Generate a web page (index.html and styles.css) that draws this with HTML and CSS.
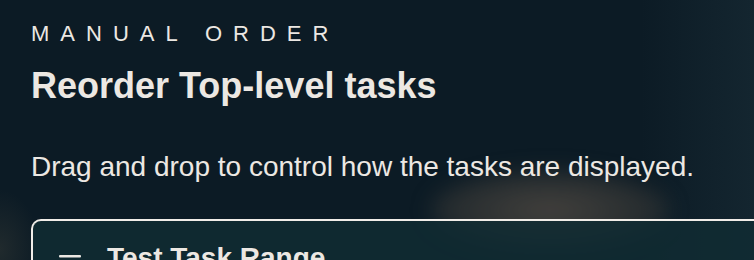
FILE: index.html
```html
<!DOCTYPE html>
<html lang="en">
<head>
<meta charset="utf-8">
<title>Manual order</title>
<link rel="stylesheet" href="styles.css">
</head>
<body>
<main class="panel">
  <div class="glow"></div>
  <p class="eyebrow">MANUAL ORDER</p>
  <h1 class="title">Reorder Top-level tasks</h1>
  <p class="lead">Drag and drop to control how the tasks are displayed.</p>
  <ul class="task-list">
    <li class="task-card">
      <svg class="handle" width="22" height="18" viewBox="0 0 22 18" aria-hidden="true">
        <rect x="0" y="0" width="22" height="2.6" rx="1" fill="#ece8e3"/>
        <rect x="0" y="7.7" width="22" height="2.6" rx="1" fill="#ece8e3"/>
        <rect x="0" y="15.4" width="22" height="2.6" rx="1" fill="#ece8e3"/>
      </svg>
      <span class="task-name">Test Task Range</span>
    </li>
  </ul>
</main>
</body>
</html>
```
FILE: styles.css
```css
html, body {
  margin: 0;
  padding: 0;
  height: 100%;
  overflow: hidden;
}
body {
  background: #0c1b25;
  font-family: "Liberation Sans", Arial, sans-serif;
  color: #ece8e3;
}
.panel {
  position: relative;
  height: 100%;
  padding: 23px 0 0 31px;
  box-sizing: border-box;
  background:
    radial-gradient(ellipse 40px 60px at 0px 250px, rgba(70, 70, 60, 0.35), rgba(70,70,60,0) 100%),
    linear-gradient(90deg, rgba(20, 40, 50, 0) 85%, rgba(25, 45, 55, 0.6) 100%),
    #0c1b25;
}
.glow {
  position: absolute;
  left: 430px;
  top: 170px;
  width: 240px;
  height: 80px;
  border-radius: 50%;
  background: radial-gradient(ellipse at 50% 50%, rgba(78, 72, 66, 0.85), rgba(70, 66, 60, 0.5) 55%, rgba(60, 60, 55, 0) 100%);
  filter: blur(10px);
  pointer-events: none;
}
.eyebrow {
  position: relative;
  margin: 0;
  font-size: 22px;
  line-height: 1;
  letter-spacing: 0.5em;
  font-weight: 400;
}
.title {
  position: relative;
  margin: 23px 0 0;
  font-size: 36px;
  line-height: 1;
  font-weight: 700;
}
.lead {
  position: relative;
  margin: 49px 0 0;
  font-size: 28px;
  line-height: 1;
  font-weight: 400;
}
.task-list {
  position: relative;
  list-style: none;
  margin: 38px 0 0;
  padding: 0;
}
.task-card {
  display: flex;
  align-items: flex-start;
  gap: 26px;
  padding: 23px 26px 30px;
  border: 2.5px solid #f1ede8;
  border-right: none;
  border-radius: 10px 0 0 10px;
  background: rgba(16, 44, 50, 0.85);
}
.handle {
  margin-top: 11px;
  flex: none;
}
.task-name {
  font-size: 28px;
  line-height: 1;
  font-weight: 700;
}
```
